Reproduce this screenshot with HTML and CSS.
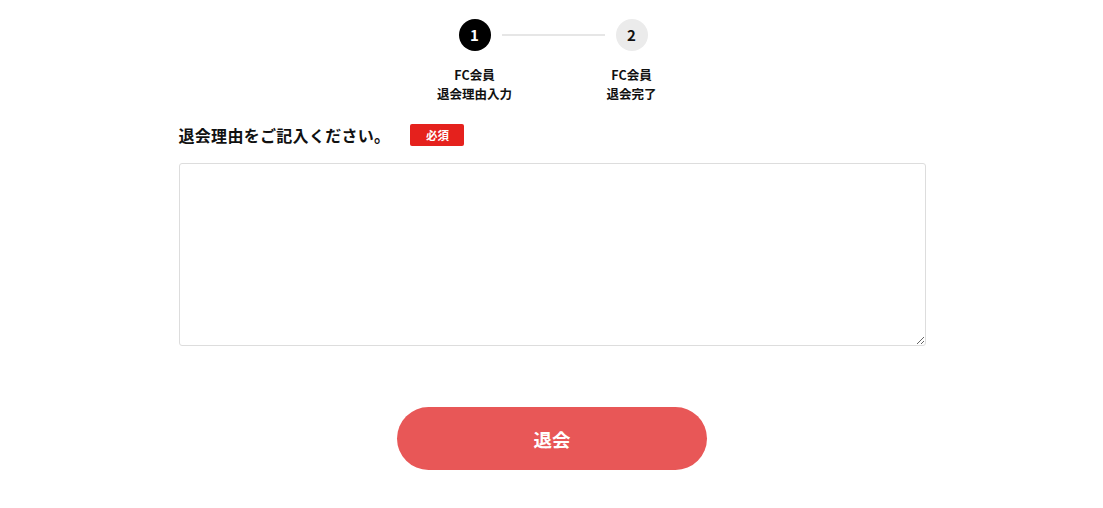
FILE: index.html
```html
<!DOCTYPE html>
<html lang="ja">
<head>
<meta charset="utf-8">
<title>退会</title>
<link rel="stylesheet" href="styles.css">
</head>
<body>
<main class="page">
  <div class="stepper">
    <div class="step">
      <div class="circle circle-active">1</div>
      <div class="step-label">FC会員<br>退会理由入力</div>
    </div>
    <div class="step-line"></div>
    <div class="step">
      <div class="circle">2</div>
      <div class="step-label">FC会員<br>退会完了</div>
    </div>
  </div>

  <form class="form">
    <div class="field-head">
      <label class="field-label" for="reason">退会理由をご記入ください。</label>
      <span class="badge">必須</span>
    </div>
    <textarea id="reason" class="reason"></textarea>
    <div class="actions">
      <button type="button" class="submit">退会</button>
    </div>
  </form>
</main>
</body>
</html>
```

FILE: styles.css
```css
html, body {
  margin: 0;
  padding: 0;
  background: #fff;
}
body {
  font-family: "Noto Sans CJK JP", "Noto Sans", sans-serif;
  color: #111;
}
.page {
  width: 747px;
  margin: 0 auto;
  padding-top: 19px;
  padding-left: 1px;
}
.stepper {
  display: flex;
  justify-content: center;
  align-items: flex-start;
  padding-left: 2px;
}
.step {
  width: 32px;
  display: flex;
  flex-direction: column;
  align-items: center;
}
.circle {
  width: 32px;
  height: 32px;
  border-radius: 50%;
  background: #ebebeb;
  color: #111;
  font-weight: 700;
  font-size: 15px;
  line-height: 32px;
  text-align: center;
}
.circle-active {
  background: #000;
  color: #fff;
}
.step-line {
  width: 103px;
  height: 2px;
  margin: 15px 11px 0;
  background: #e6e6e6;
}
.step-label {
  margin-top: 14px;
  white-space: nowrap;
  text-align: center;
  font-size: 12.5px;
  font-weight: 700;
  line-height: 19px;
}
.form {
  margin-top: 21px;
}
.field-head {
  display: flex;
  align-items: center;
  height: 22px;
}
.field-label {
  font-size: 16px;
  font-weight: 700;
  line-height: 22px;
  letter-spacing: 0.3px;
}
.badge {
  margin-left: 20px;
  width: 54px;
  height: 22px;
  border-radius: 2px;
  background: #e5211d;
  color: #fff;
  font-size: 11.5px;
  font-weight: 700;
  line-height: 22px;
  text-align: center;
}
.reason {
  display: block;
  box-sizing: border-box;
  width: 747px;
  height: 183px;
  margin-top: 17px;
  border: 1px solid #ddd;
  border-radius: 3px;
  padding: 8px;
  font-family: inherit;
  font-size: 14px;
  resize: vertical;
}
.actions {
  display: flex;
  justify-content: center;
  margin-top: 61px;
}
.submit {
  width: 310px;
  height: 63px;
  border: none;
  border-radius: 32px;
  background: #e85757;
  color: #fff;
  font-family: inherit;
  font-size: 18.5px;
  font-weight: 700;
  cursor: pointer;
}
```
